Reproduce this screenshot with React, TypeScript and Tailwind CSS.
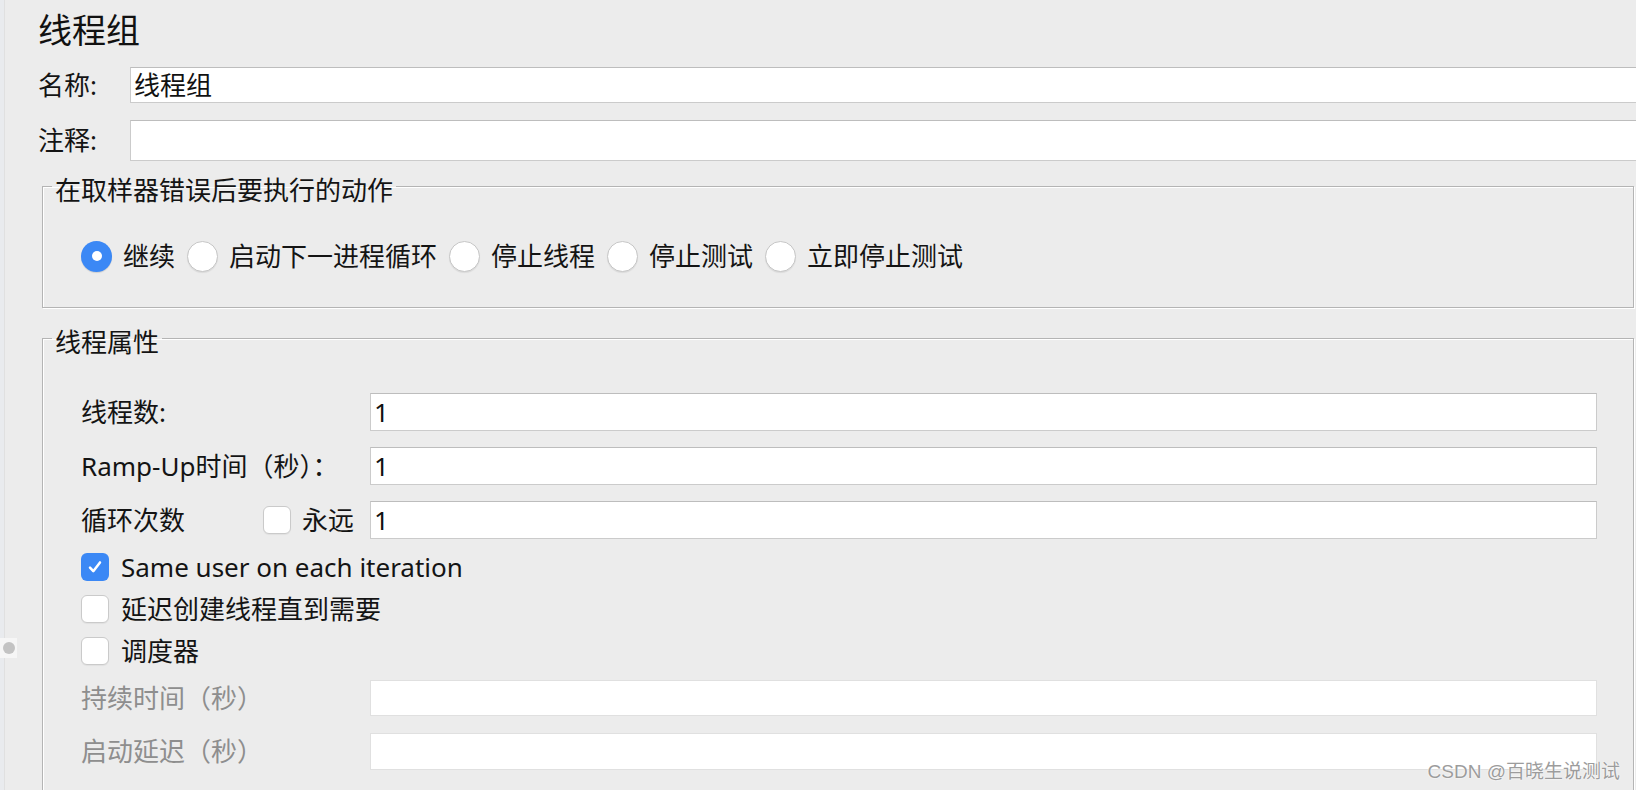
import { ReactNode } from 'react';

const FONT = "font-['Noto_Sans','Noto_Sans_CJK_SC',sans-serif]";

function Radio({ checked, label }: { checked?: boolean; label: string }) {
    return (
        <div className="flex items-center gap-[11px] mr-[12px]">
            {checked ? (
                <span className="w-[31px] h-[31px] rounded-full bg-[#3b88f5] flex items-center justify-center shadow-[0_1px_1px_rgba(0,0,0,0.12)]">
                    <span className="w-[10px] h-[10px] rounded-full bg-white" />
                </span>
            ) : (
                <span className="w-[31px] h-[31px] rounded-full bg-white border border-[#c6c6c6] shadow-[0_1px_1px_rgba(0,0,0,0.08)]" />
            )}
            <span className="text-[26px] leading-[34px] text-[#141414]">{label}</span>
        </div>
    );
}

function CheckBox({ checked }: { checked?: boolean }) {
    if (checked) {
        return (
            <span className="w-[28px] h-[28px] shrink-0 rounded-[6px] bg-[#3b88f5] flex items-center justify-center">
                <svg width="18" height="18" viewBox="0 0 18 18">
                    <path d="M4 9.6l3.3 3.6L14 4.4" fill="none" stroke="white" strokeWidth="2.5" strokeLinecap="round" strokeLinejoin="round" />
                </svg>
            </span>
        );
    }
    return <span className="w-[28px] h-[28px] shrink-0 rounded-[6px] bg-white border border-[#cacaca] shadow-[0_1px_1px_rgba(0,0,0,0.05)]" />;
}

function Field({ value, disabled, className }: { value?: string; disabled?: boolean; className: string }) {
    return (
        <input
            readOnly
            value={value ?? ''}
            className={
                className +
                (disabled
                    ? ' flex-1 min-w-0 bg-white border border-[#e0e0e0] px-[3px] text-[26px] outline-none'
                    : ' flex-1 min-w-0 bg-white border border-[#cbcbcb] border-t-[#bdbdbd] px-[3px] text-[26px] text-[#111] outline-none')
            }
        />
    );
}

function Group({ title, className, children }: { title: string; className: string; children: ReactNode }) {
    return (
        <fieldset
            className={
                'ml-[4px] mr-[2px] pl-[9px] pr-[36px] border border-[#b4b4b4] shadow-[1px_1px_0_#ffffff,inset_1px_1px_0_#ffffff] ' +
                className
            }
        >
            <legend className="px-[3px] pt-[8px] text-[26px] leading-[26px] text-[#141414]">{title}</legend>
            <div className="pl-[29px]">{children}</div>
        </fieldset>
    );
}

export default function App() {
    return (
        <div className={`relative h-[790px] w-full overflow-hidden bg-[#ececec] flex ${FONT}`}>
            {/* left edge strip */}
            <div className="w-[5px] shrink-0 bg-[#e9ebee] border-r border-[#e0e0e0]" />

            <div className="flex-1 min-w-0 flex flex-col pl-[33px] pt-[14px]">
                <h1 className="text-[34px] leading-[33px] text-[#111]">线程组</h1>

                <div className="mt-[20px] flex items-center h-[36px]">
                    <span className="w-[92px] shrink-0 text-[26px] text-[#141414]">名称:</span>
                    <Field value="线程组" className="h-[36px] -mr-[4px] px-[2px]" />
                </div>
                <div className="mt-[17px] flex items-center h-[41px]">
                    <span className="w-[92px] shrink-0 text-[26px] text-[#141414]">注释:</span>
                    <Field className="h-[41px] -mr-[4px]" />
                </div>

                {/* 错误动作 */}
                <Group title="在取样器错误后要执行的动作" className="mt-[8px] pt-[36px] pb-[34px]">
                    <div className="flex items-center h-[34px]">
                        <Radio checked label="继续" />
                        <Radio label="启动下一进程循环" />
                        <Radio label="停止线程" />
                        <Radio label="停止测试" />
                        <Radio label="立即停止测试" />
                    </div>
                </Group>

                {/* 线程属性 */}
                <Group title="线程属性" className="mt-[13px] pt-[38px] pb-[40px]">
                    <div className="flex flex-col text-[26px] text-[#141414]">
                        <div className="flex items-center h-[38px]">
                            <span className="w-[289px] shrink-0">线程数:</span>
                            <Field value="1" className="h-[38px]" />
                        </div>
                        <div className="mt-[16px] flex items-center h-[38px]">
                            <span className="w-[289px] shrink-0">Ramp-Up时间（秒）：</span>
                            <Field value="1" className="h-[38px]" />
                        </div>
                        <div className="mt-[16px] flex items-center h-[38px]">
                            <span className="w-[182px] shrink-0">循环次数</span>
                            <CheckBox />
                            <span className="ml-[11px] mr-[16px] w-[52px]">永远</span>
                            <Field value="1" className="h-[38px]" />
                        </div>

                        <div className="mt-[11px] flex items-center gap-[12px] h-[34px]">
                            <CheckBox checked />
                            <span>Same user on each iteration</span>
                        </div>
                        <div className="mt-[8px] flex items-center gap-[12px] h-[34px]">
                            <CheckBox />
                            <span>延迟创建线程直到需要</span>
                        </div>
                        <div className="mt-[8px] flex items-center gap-[12px] h-[34px]">
                            <CheckBox />
                            <span>调度器</span>
                        </div>

                        <div className="mt-[12px] flex items-center h-[36px] text-[#8e8e8e]">
                            <span className="w-[289px] shrink-0">持续时间（秒）</span>
                            <Field disabled className="h-[36px]" />
                        </div>
                        <div className="mt-[17px] flex items-center h-[37px] text-[#8e8e8e]">
                            <span className="w-[289px] shrink-0">启动延迟（秒）</span>
                            <Field disabled className="h-[37px]" />
                        </div>
                    </div>
                </Group>
            </div>

            {/* splitter handle */}
            <div className="absolute left-0 top-[638px] w-[17px] h-[20px] bg-[#f6f6f6] flex items-center justify-center">
                <span className="w-[12px] h-[12px] rounded-full bg-[#c3c3c3]" />
            </div>

            {/* watermark */}
            <div className="absolute right-[16px] bottom-[7px] text-[19px] leading-[22px] text-[#9c9c9c] font-['Liberation_Sans','Noto_Sans_CJK_SC',sans-serif] [text-shadow:0_0_2px_#ffffff,0_0_1px_#ffffff]">
                CSDN @百晓生说测试
            </div>
        </div>
    );
}
